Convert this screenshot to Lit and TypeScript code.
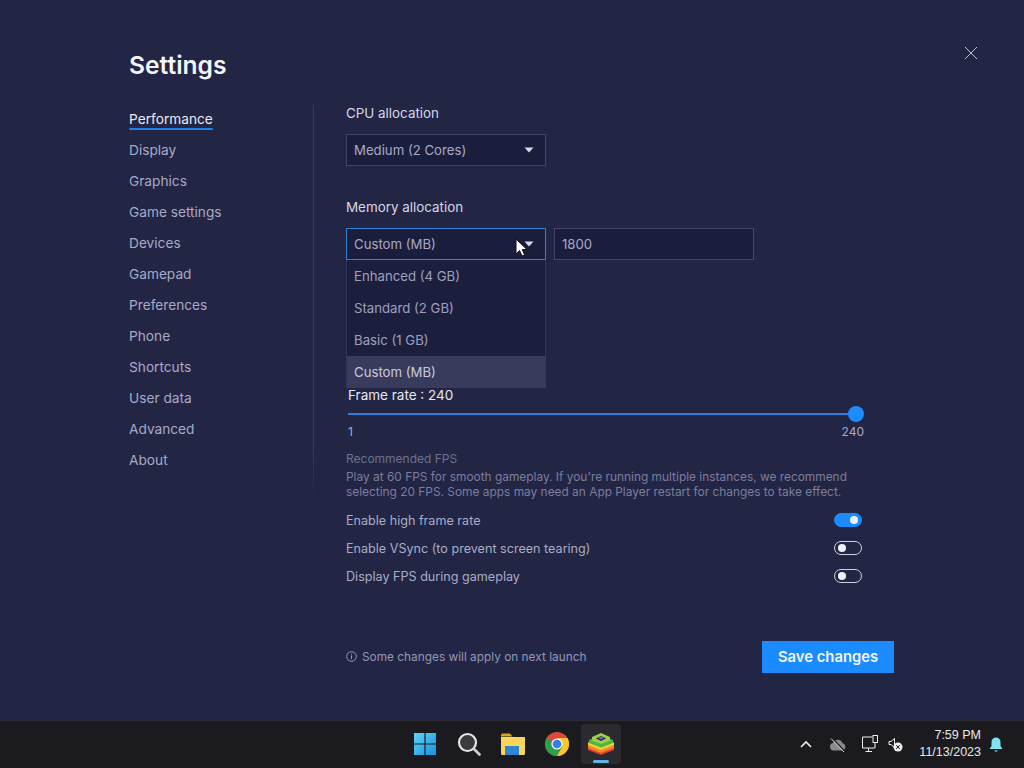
import { LitElement, html, css } from "lit";
import { customElement } from "lit/decorators.js";

const NAV = ["Performance","Display","Graphics","Game settings","Devices","Gamepad","Preferences","Phone","Shortcuts","User data","Advanced","About"];
const caret = html`<svg class="caret" width="10" height="6" viewBox="0 0 10 6"><path d="M0.5 0.5H9.5L5 5.5Z" fill="#d8dae8"/></svg>`;

@customElement("app-root")
export class AppRoot extends LitElement {
  static styles = css`
    :host { display:block; width:1024px; height:768px; overflow:hidden; position:relative; font-family:"Inter","Noto Sans",sans-serif; background:#222544; }
    * { box-sizing:border-box; }
    .main { height:720px; position:relative; display:flex; padding:0 0 0 129px; }
    .side { width:185px; flex:none; padding-top:47px; }
    h1 { margin:0 0 26px; font-size:24.6px; line-height:36px; font-weight:600; color:#f4f5fb; letter-spacing:0; }
    .nav { display:flex; flex-direction:column; gap:11px; align-items:flex-start; }
    .nav a { font-size:13.7px; line-height:20px; color:#a7aac6; position:relative; }
    .nav a.on { color:#e8e9f4; }
    .nav a.on::after { content:""; position:absolute; left:0; right:0; bottom:-1px; height:2px; background:#1e82e6; border-radius:1px; }
    .content { flex:none; width:548px; margin-top:105px; padding-left:0; margin-left:32px; position:relative; }
    .divider { position:absolute; left:-33px; top:0; height:400px; width:1px; background:linear-gradient(#383b5c 85%, #22254400); }
    .label { font-size:13.4px; line-height:16px; color:#d6d8e6; }
    .sel { margin-top:13px; width:200px; height:32px; background:#1b1d3c; border:1px solid #42456a; display:flex; align-items:center; justify-content:space-between; padding:0 11px 0 7px; font-size:13.2px; color:#a7aac6; }
    .sel.focus { border-color:#2f7fd6; }
    .mem { margin-top:33px; }
    .row { display:flex; gap:8px; margin-top:13px; position:relative; }
    .row .sel { margin-top:0; }
    .menu { position:absolute; left:0; top:32px; width:200px; background:#1c1e3e; border:solid #33365a; border-width:0 1px; z-index:2; }
    .menu div { height:32px; display:flex; align-items:center; padding-left:7px; font-size:13.2px; color:#9ea1be; }
    .menu div.on { background:#383b5c; color:#c9cbdc; }
    .rate { margin:127px 0 0 2px; width:514px; font-size:13.5px; line-height:16px; color:#e6e7f2; }
    .track { margin-top:1px; height:20px; position:relative; display:flex; align-items:center; }
    .track i { display:block; height:2px; width:100%; background:#2a7fdc; margin-right:4px; }
    .track b { position:absolute; right:-2px; top:2px; width:16px; height:16px; border-radius:50%; background:#1a8cff; }
    .ends { display:flex; justify-content:space-between; font-size:12px; line-height:14px; color:#a7aac6; margin:1px -2px 0 0; }
    .rec { margin-top:13px; font-size:12px; line-height:14px; color:#6e7190; }
    .desc { margin-top:3px; font-size:11.9px; line-height:15px; color:#7b7e9c; white-space:nowrap; }
    .toggles { width:516px; margin-top:7px; display:flex; flex-direction:column; }
    .t { height:28px; display:flex; align-items:center; justify-content:space-between; font-size:12.6px; color:#a9acc6; }
    .sw { width:28px; height:14px; border-radius:7px; border:1px solid #cfd1df; position:relative; }
    .sw::after { content:""; position:absolute; left:3px; top:2px; width:8px; height:8px; border-radius:50%; background:#f0f1f8; }
    .sw.on { background:#1a8cff; border-color:#1a8cff; }
    .sw.on::after { left:auto; right:3px; }
    .foot { margin-top:51px; display:flex; align-items:center; justify-content:space-between; }
    .note { display:flex; align-items:center; gap:5px; font-size:11.85px; color:#9497b4; margin-top:-1px; }
    .save { width:132px; height:32px; background:#1a8cff; color:#f2f6ff; display:flex; align-items:center; justify-content:center; font-size:14.8px; font-weight:600; }
    .close { position:absolute; left:964px; top:46px; width:14px; height:14px; }
    .cursor { position:absolute; left:515px; top:238px; z-index:3; }
    .bar { height:48px; background:#1b1b1f; border-top:1px solid #2b2c33; padding-bottom:1px; display:grid; grid-template-columns:1fr auto 1fr; align-items:center; }
    .apps { display:flex; gap:4px; padding-left:2px; }
    .app { width:40px; height:40px; display:flex; align-items:center; justify-content:center; position:relative; border-radius:4px; }
    .app.on { background:#2b2b2f; }
    .app.on::after { content:""; position:absolute; left:12px; bottom:1px; width:16px; height:3px; border-radius:2px; background:#5bb4e8; }
    .tray { grid-column:3; display:flex; align-items:center; justify-content:flex-end; padding-right:20px; color:#f0f0f0; }
    .clock { text-align:right; font-family:"Liberation Sans",sans-serif; font-size:12.5px; line-height:17px; color:#e8e8e8; margin:0 7px 0 16px; white-space:nowrap; }
    .tray svg { flex:none; display:block; }
    .chev { margin-right:16px; }
    .cloud { margin-right:15px; }
    .mon { margin-right:9px; }
  `;

  render() {
    return html`
      <div class="main">
        <div class="side">
          <h1>Settings</h1>
          <div class="nav">${NAV.map((n,i)=>html`<a class=${i===0?"on":""}>${n}</a>`)}</div>
        </div>
        <div class="content">
          <div class="divider"></div>
          <div class="label">CPU allocation</div>
          <div class="sel"><span>Medium (2 Cores)</span>${caret}</div>
          <div class="label mem">Memory allocation</div>
          <div class="row">
            <div class="sel focus"><span>Custom (MB)</span>${caret}</div>
            <div class="sel">1800</div>
            <div class="menu">
              <div>Enhanced (4 GB)</div><div>Standard (2 GB)</div><div>Basic (1 GB)</div><div class="on">Custom (MB)</div>
            </div>
          </div>
          <div class="rate">Frame rate : 240
            <div class="track"><i></i><b></b></div>
            <div class="ends"><span>1</span><span>240</span></div>
          </div>
          <div class="rec">Recommended FPS</div>
          <div class="desc">Play at 60 FPS for smooth gameplay. If you're running multiple instances, we recommend<br>selecting 20 FPS. Some apps may need an App Player restart for changes to take effect.</div>
          <div class="toggles">
            <div class="t">Enable high frame rate<span class="sw on"></span></div>
            <div class="t">Enable VSync (to prevent screen tearing)<span class="sw"></span></div>
            <div class="t">Display FPS during gameplay<span class="sw"></span></div>
          </div>
          <div class="foot">
            <div class="note"><svg width="11" height="11" viewBox="0 0 11 11" fill="none" stroke="#9497b4"><circle cx="5.5" cy="5.5" r="4.8"/><path d="M5.5 4.5V8.2M5.5 2.6V3.6"/></svg>Some changes will apply on next launch</div>
            <div class="save">Save changes</div>
          </div>
        </div>
        <svg class="close" viewBox="0 0 14 14" stroke="#b9bbd2" stroke-width="1"><path d="M1 1L13 13M13 1L1 13"/></svg>
        <svg class="cursor" width="14" height="20" viewBox="0 0 14 20"><path d="M1 1V16L4.6 12.6L7 18L9.6 16.8L7.2 11.6H12Z" fill="#fff" stroke="#111" stroke-width="1"/></svg>
      </div>
      <div class="bar">
        <span></span>
        <div class="apps">
          <div class="app"><svg width="24" height="24" viewBox="0 0 24 24"><defs><linearGradient id="w" x1="0" y1="0" x2="1" y2="1"><stop offset="0" stop-color="#5fd4f6"/><stop offset="1" stop-color="#1a8fe0"/></linearGradient></defs><path d="M1 1h10.400v10.400H1zM12.600 1H23v10.400H12.600zM1 12.600h10.400V23H1zM12.600 12.600H23V23H12.600z" fill="url(#w)"/></svg></div>
          <div class="app"><svg width="24" height="24" viewBox="0 0 24 24" fill="none"><circle cx="10.500" cy="10.500" r="8.500" fill="#3a3a3e" stroke="#e6e6e6" stroke-width="2.200"/><path d="M17 17L22.500 22.500" stroke="#cfcfcf" stroke-width="2.600" stroke-linecap="round"/></svg></div>
          <div class="app"><svg width="26" height="24" viewBox="0 0 26 24"><path d="M1 3a1.500 1.500 0 0 1 1.500-1.500H10l2.500 3H1z" fill="#d9a520"/><path d="M1 5h23.500a.8.8 0 0 1 .5.800V21.500a1.500 1.500 0 0 1-1.500 1.500H2.500A1.500 1.500 0 0 1 1 21.500z" fill="#fbd45c"/><path d="M5 14h14v9H5z" fill="#2f86d0"/><path d="M7 11h10v3H7z" fill="#fbd45c"/></svg></div>
          <div class="app"><svg width="24" height="24" viewBox="0 0 24 24"><circle cx="12" cy="12" r="12" fill="#dd4a3c"/><path d="M12 12L1.600 6A12 12 0 0 0 12 24L17.200 15z" fill="#2f9e48"/><path d="M12 6H22.400A12 12 0 0 1 12 24L17.200 15z" fill="#fbc92f"/><circle cx="12" cy="12" r="5.600" fill="#eef2fb"/><circle cx="12" cy="12" r="4.300" fill="#2f7fe6"/></svg></div>
          <div class="app on"><svg width="28" height="24" viewBox="0 0 28 24"><path d="M14 10L27 15V18L14 23L1 18V15Z" fill="#e23c3c"/><path d="M14 8L27 13V16L14 21L1 16V13Z" fill="#f08a24"/><path d="M14 5.500L27 10.500V13L14 18L1 13V10.500Z" fill="#f4cf2c"/><path d="M14 3L26 8V11L14 15.500L2 11V8Z" fill="#4cb648"/><path d="M14 1L23 5V8.500L14 12L5 8.500V5Z" fill="#9ad04a"/><path d="M14 4L19 6.500L14 9L9 6.500Z" fill="#2a2440"/><path d="M14 4.500L17 6L14 7.500L11 6Z" fill="#7c5fd4"/></svg></div>
        </div>
        <div class="tray">
          <svg class="chev" width="14" height="8" viewBox="0 0 14 8" fill="none" stroke="#eee" stroke-width="1.600"><path d="M2 7L7 2L12 7"/></svg>
          <svg class="cloud" width="18" height="15" viewBox="0 0 18 15"><path d="M4.500 13.500A3.800 3.800 0 0 1 4 6A5 5 0 0 1 13.500 6.300A3.700 3.700 0 0 1 13.500 13.500Z" fill="#8a8a8a"/><path d="M3 1L16 14.500" stroke="#1b1b1f" stroke-width="1.400"/><path d="M2 1.500L15 15" stroke="#e0e0e0" stroke-width="1"/></svg>
          <svg class="mon" width="17" height="18" viewBox="0 0 17 18" fill="none" stroke="#eee" stroke-width="1"><path d="M10.500 2H.5V13H13V8M6.500 13V16.500M3.500 16.500H10"/><rect x="11" y=".5" width="4.500" height="7"/></svg>
          <svg width="15" height="15" viewBox="0 0 15 15"><path d="M1 4.500H3L6.500 1.500V10.500L3 7.500H1Z" fill="none" stroke="#eee"/><circle cx="10" cy="10" r="4.500" fill="#eee"/><path d="M8.200 8.200L11.800 11.800M11.800 8.200L8.200 11.800" stroke="#1b1b1f" stroke-width="1"/></svg>
          <div class="clock">7:59 PM<br>11/13/2023</div>
          <svg width="16" height="17" viewBox="0 0 16 17"><path d="M8 1.500A4.500 4.500 0 0 0 3.500 6V10L1.500 13H14.500L12.500 10V6A4.500 4.500 0 0 0 8 1.500Z" fill="#7fe3f2"/><path d="M6 14.500H10L8 16Z" fill="#7fe3f2"/></svg>
        </div>
      </div>
    `;
  }
}
